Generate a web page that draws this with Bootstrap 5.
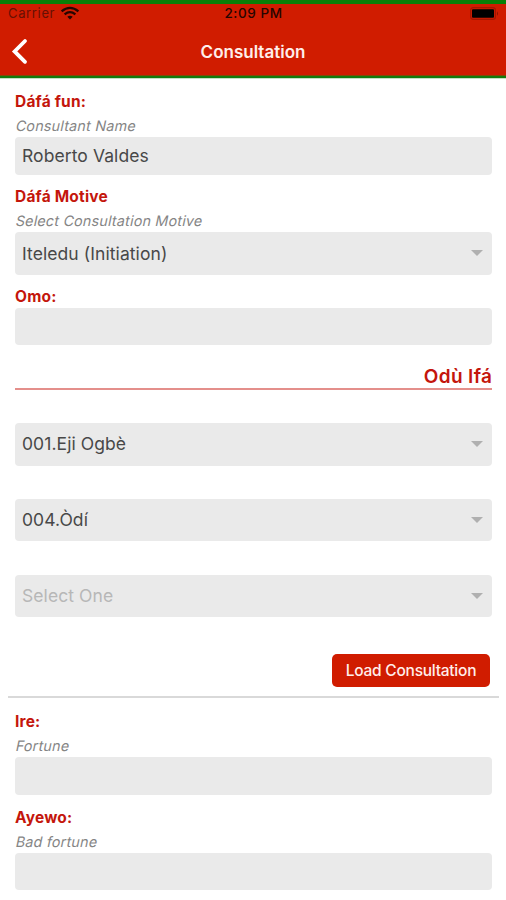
<!DOCTYPE html>
<html lang="en">
<head>
<meta charset="utf-8">
<meta name="viewport" content="width=device-width, initial-scale=1">
<title>Consultation</title>
<link href="https://cdn.jsdelivr.net/npm/bootstrap@5.3.0/dist/css/bootstrap.min.css" rel="stylesheet">
<style>
  :root { --brand: #d01c00; --label: #c4160c; --field: #eaeaea; }
  body { font-family: Inter, "Liberation Sans", sans-serif; background: #fff; color: #484848; height: 900px; overflow: hidden; }
  .app-header { height: 78px; background: var(--brand); border-top: 4px solid #088008; border-bottom: 2px solid #147a0c; box-shadow: inset 0 -1px #7f4a06, 0 1px #c5dfc5; }
  .status-bar { height: 19px; font-size: 13px; line-height: 19px; color: #260500; padding: 0 7px 0 8px; }
  .status-bar .carrier { color: #651004; letter-spacing: .65px; }
  .status-bar .clock { font-size: 13.5px; font-weight: 500; letter-spacing: .55px; }
  .title-bar { height: 52px; padding-top: 4px; }
  .title-bar h1 { font-size: 17px; font-weight: 600; line-height: 24px; letter-spacing: 0; color: #ffeeea; padding-top: 1px; }
  .side { flex: 1 1 0; }
  .form-area { padding: 12px 14px 0 15px; }
  .field-title { height: 24px; line-height: 24px; font-size: 15.5px; font-weight: 700; letter-spacing: .2px; color: var(--label); }
  .field-hint { height: 23px; line-height: 24px; font-size: 14.3px; letter-spacing: .22px; color: #858585; }
  .field-hint span { display: inline-block; transform: skewX(-12deg); margin-left: 1px; }
  .field-box { height: 37.5px; border: 0; border-radius: 4px; background: var(--field); color: #484848; font-size: 17.5px; letter-spacing: .08px; line-height: 38px; padding: 0 7px; margin-bottom: 10.7px; }
  .pick-box { height: 42.7px; border: 0; border-radius: 4px; background: var(--field); color: #484848; font-size: 17.5px; letter-spacing: .08px; line-height: 24px; padding: 0 9px 0 7px; }
  .pick-box.empty { color: #b7b7b7; padding-top: 1px; }
  .caret { border-left: 6px solid transparent; border-right: 6px solid transparent; border-top: 6px solid #b0b0b0; margin-bottom: 1px; }
  .field-title.after-pick { margin-top: 10px; height: 23px; }
  .section-title { height: 23px; margin: 19.5px 0 33px; font-size: 19px; font-weight: 600; line-height: 23px; letter-spacing: .35px; color: var(--label); border-bottom: 2px solid #e48f8b; box-sizing: content-box; }
  .section-title span { margin-right: -.35px; }
  .picks { gap: 33.2px; }
  .load-btn { width: 158px; height: 33px; margin: 37px 2px 0 0; padding: 0; border: 0; border-radius: 5px; background: var(--brand); color: #ffeeea; font-size: 15.5px; font-weight: 500; letter-spacing: -.25px; line-height: 33px; }
  .divider { height: 2px; margin: 9px -7px 12px; background: #d9d9d9; }
</style>
</head>
<body>
<header class="app-header">
  <div class="status-bar d-flex">
    <div class="side d-flex align-items-center">
      <span class="carrier">Carrier</span>
      <svg style="margin-left:5px" width="20" height="15" viewBox="0 0 20 15" fill="none" stroke="#260500" stroke-width="2.3"><path d="M1.6 5.3Q10-1.6 18.4 5.3"/><path d="M4.6 8.3Q10 4 15.4 8.3"/><path d="M10 13.5L7.3 10.8Q10 8.7 12.7 10.8Z" fill="#260500" stroke="none"/></svg>
    </div>
    <span class="clock">2:09 PM</span>
    <div class="side d-flex justify-content-end align-items-center">
      <svg width="29" height="13" viewBox="0 0 29 13"><rect x=".6" y=".6" width="24.8" height="11.8" rx="2.6" fill="none" stroke="#a51600" stroke-width="1.2"/><rect x="2" y="2.2" width="22" height="8.6" rx="1" fill="#000"/><path d="M27 4.2Q29 6.5 27 8.8Z" fill="#8b1200"/></svg>
    </div>
  </div>
  <nav class="title-bar d-flex align-items-center">
    <div class="side d-flex">
      <svg width="30" height="28" viewBox="0 0 30 28" fill="none" stroke="#fff" stroke-width="3.8" stroke-linecap="round"><path d="M25 4L14.6 14.4L25 24.8"/></svg>
    </div>
    <h1 class="mb-0">Consultation</h1>
    <div class="side"></div>
  </nav>
</header>

<main class="form-area">
  <div class="field-title"><span>Dáfá fun:</span></div>
  <div class="field-hint"><span>Consultant Name</span></div>
  <div class="field-box form-control" role="textbox">Roberto Valdes</div>

  <div class="field-title"><span>Dáfá Motive</span></div>
  <div class="field-hint"><span>Select Consultation Motive</span></div>
  <button type="button" class="pick-box w-100 d-flex align-items-center justify-content-between"><span>Iteledu (Initiation)</span><i class="caret"></i></button>

  <div class="field-title after-pick"><span>Omo:</span></div>
  <input class="field-box form-control" type="text" aria-label="Omo">

  <h2 class="section-title text-end"><span>Odù Ifá</span></h2>
  <div class="picks d-flex flex-column">
    <button type="button" class="pick-box w-100 d-flex align-items-center justify-content-between"><span>001.Eji Ogbè</span><i class="caret"></i></button>
    <button type="button" class="pick-box w-100 d-flex align-items-center justify-content-between"><span>004.Òdí</span><i class="caret"></i></button>
    <button type="button" class="pick-box empty w-100 d-flex align-items-center justify-content-between"><span>Select One</span><i class="caret"></i></button>
  </div>
  <div class="d-flex justify-content-end"><button type="button" class="load-btn btn">Load Consultation</button></div>
  <div class="divider"></div>

  <div class="field-title"><span>Ire:</span></div>
  <div class="field-hint"><span>Fortune</span></div>
  <input class="field-box form-control" type="text" aria-label="Ire">
  <div class="field-title"><span>Ayewo:</span></div>
  <div class="field-hint"><span>Bad fortune</span></div>
  <input class="field-box form-control" type="text" aria-label="Ayewo">
</main>
<script src="https://cdn.jsdelivr.net/npm/bootstrap@5.3.0/dist/js/bootstrap.bundle.min.js"></script>
</body>
</html>
